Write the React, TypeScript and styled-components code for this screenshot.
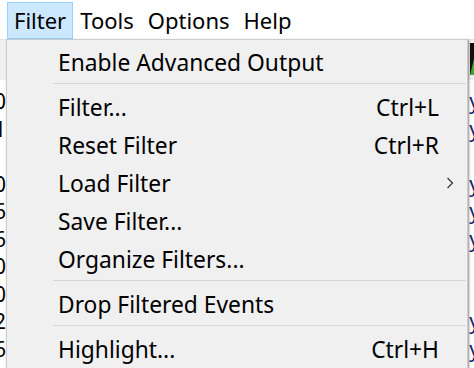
import React from "react";
import styled, { createGlobalStyle } from "styled-components";

const GlobalStyle = createGlobalStyle`
  html, body {
    margin: 0;
    padding: 0;
    background: #ffffff;
  }
  body {
    font-family: "Noto Sans", "Open Sans", "Liberation Sans", sans-serif;
    color: #000000;
  }
`;

const Window = styled.div`
  position: relative;
  width: 474px;
  height: 368px;
  overflow: hidden;
  background: #ffffff;
`;

const MenuBar = styled.div`
  display: flex;
  align-items: flex-start;
  height: 39px;
  padding: 2px 0 0 7px;
  box-sizing: border-box;
  background: #ffffff;
`;

const MenuBarItem = styled.div<{ $active?: boolean }>`
  display: flex;
  align-items: center;
  padding: 0 6px 2px 6px;
  height: 37px;
  box-sizing: border-box;
  font-size: 22px;
  border: 1px solid ${(p) => (p.$active ? "#99d1ff" : "transparent")};
  background: ${(p) => (p.$active ? "#cce8ff" : "transparent")};
`;

const Toolbar = styled.div`
  display: flex;
  justify-content: flex-end;
  align-items: flex-start;
  height: 41px;
  padding-top: 3px;
  box-sizing: border-box;
  background: #f0f0f0;
  border-top: 1px solid #e3e3e3;
`;

const ToolIcon = styled.svg`
  margin-right: -28px;
`;

const List = styled.div`
  display: flex;
  flex-direction: column;
  padding-top: 8px;
`;

const ListRow = styled.div`
  display: flex;
  justify-content: space-between;
  height: 27.5px;
  font-size: 21px;
  line-height: 27px;
  white-space: nowrap;
`;

const Cell = styled.span<{ $accent?: boolean }>`
  margin-right: -6px;
  color: ${(p) => (p.$accent ? "#e59a4a" : "#0b1f6e")};
`;

const LeftCell = styled.span`
  margin-left: -6px;
`;

const Dropdown = styled.div`
  position: absolute;
  left: 6px;
  top: 39px;
  width: 462px;
  box-sizing: border-box;
  padding: 4px 1px 4px 2px;
  background: #f0f0f0;
  border: 1px solid #cccccc;
  box-shadow: 1px 1px 2px rgba(0, 0, 0, 0.45);
`;

const MenuItem = styled.div`
  display: grid;
  grid-template-columns: 49px 1fr auto 27px;
  align-items: center;
  height: 38px;
  padding-bottom: 2px;
  box-sizing: border-box;
  font-size: 22.8px;
  white-space: nowrap;
`;

const Label = styled.span`
  grid-column: 2;
`;

const Shortcut = styled.span`
  grid-column: 3;
`;

const Arrow = styled.svg`
  grid-column: 4;
  justify-self: center;
  margin-right: 5px;
`;

const Separator = styled.div`
  height: 1px;
  margin: 1px 0 5px 44px;
  background: #d7d7d7;
`;

type Entry =
  | { kind: "item"; label: string; shortcut?: string; submenu?: boolean }
  | { kind: "sep" };

const entries: Entry[] = [
  { kind: "item", label: "Enable Advanced Output" },
  { kind: "sep" },
  { kind: "item", label: "Filter...", shortcut: "Ctrl+L" },
  { kind: "item", label: "Reset Filter", shortcut: "Ctrl+R" },
  { kind: "item", label: "Load Filter", submenu: true },
  { kind: "item", label: "Save Filter..." },
  { kind: "item", label: "Organize Filters..." },
  { kind: "sep" },
  { kind: "item", label: "Drop Filtered Events" },
  { kind: "sep" },
  { kind: "item", label: "Highlight...", shortcut: "Ctrl+H" },
];

// rows of the event list behind the menu, only the edges show
const rows = [
  { l: "0", r: "y" },
  { l: "1", r: "y" },
  { l: ".", r: "l", accent: true },
  { l: "0", r: "y" },
  { l: "6", r: "y" },
  { l: "6", r: "y" },
  { l: "0", r: "l", accent: true },
  { l: "0", r: "l", accent: true },
  { l: "2", r: "y" },
  { l: "6", r: "y" },
];

const App = () => {
  return (
    <Window>
      <GlobalStyle />
      <MenuBar>
        <MenuBarItem $active>Filter</MenuBarItem>
        <MenuBarItem>Tools</MenuBarItem>
        <MenuBarItem>Options</MenuBarItem>
        <MenuBarItem>Help</MenuBarItem>
      </MenuBar>
      <Toolbar>
        <ToolIcon width="32" height="32" viewBox="0 0 32 32">
          <rect width="32" height="32" fill="#111" />
          <path d="M0 32 L4 16 L9 24 L14 12 L20 26 L26 18 L32 32 Z" fill="#3fa535" />
        </ToolIcon>
      </Toolbar>
      <List>
        {rows.map((r, i) => (
          <ListRow key={i}>
            <LeftCell>{r.l}</LeftCell>
            <Cell $accent={r.accent}>{r.r}</Cell>
          </ListRow>
        ))}
      </List>
      <Dropdown>
        {entries.map((e, i) =>
          e.kind === "sep" ? (
            <Separator key={i} />
          ) : (
            <MenuItem key={i}>
              <Label>{e.label}</Label>
              {e.shortcut && <Shortcut>{e.shortcut}</Shortcut>}
              {e.submenu && (
                <Arrow width="8" height="12" viewBox="0 0 8 12">
                  <polyline
                    points="1.5,1 6.5,6 1.5,11"
                    fill="none"
                    stroke="#333"
                    strokeWidth="1.2"
                  />
                </Arrow>
              )}
            </MenuItem>
          )
        )}
      </Dropdown>
    </Window>
  );
};

export default App;
